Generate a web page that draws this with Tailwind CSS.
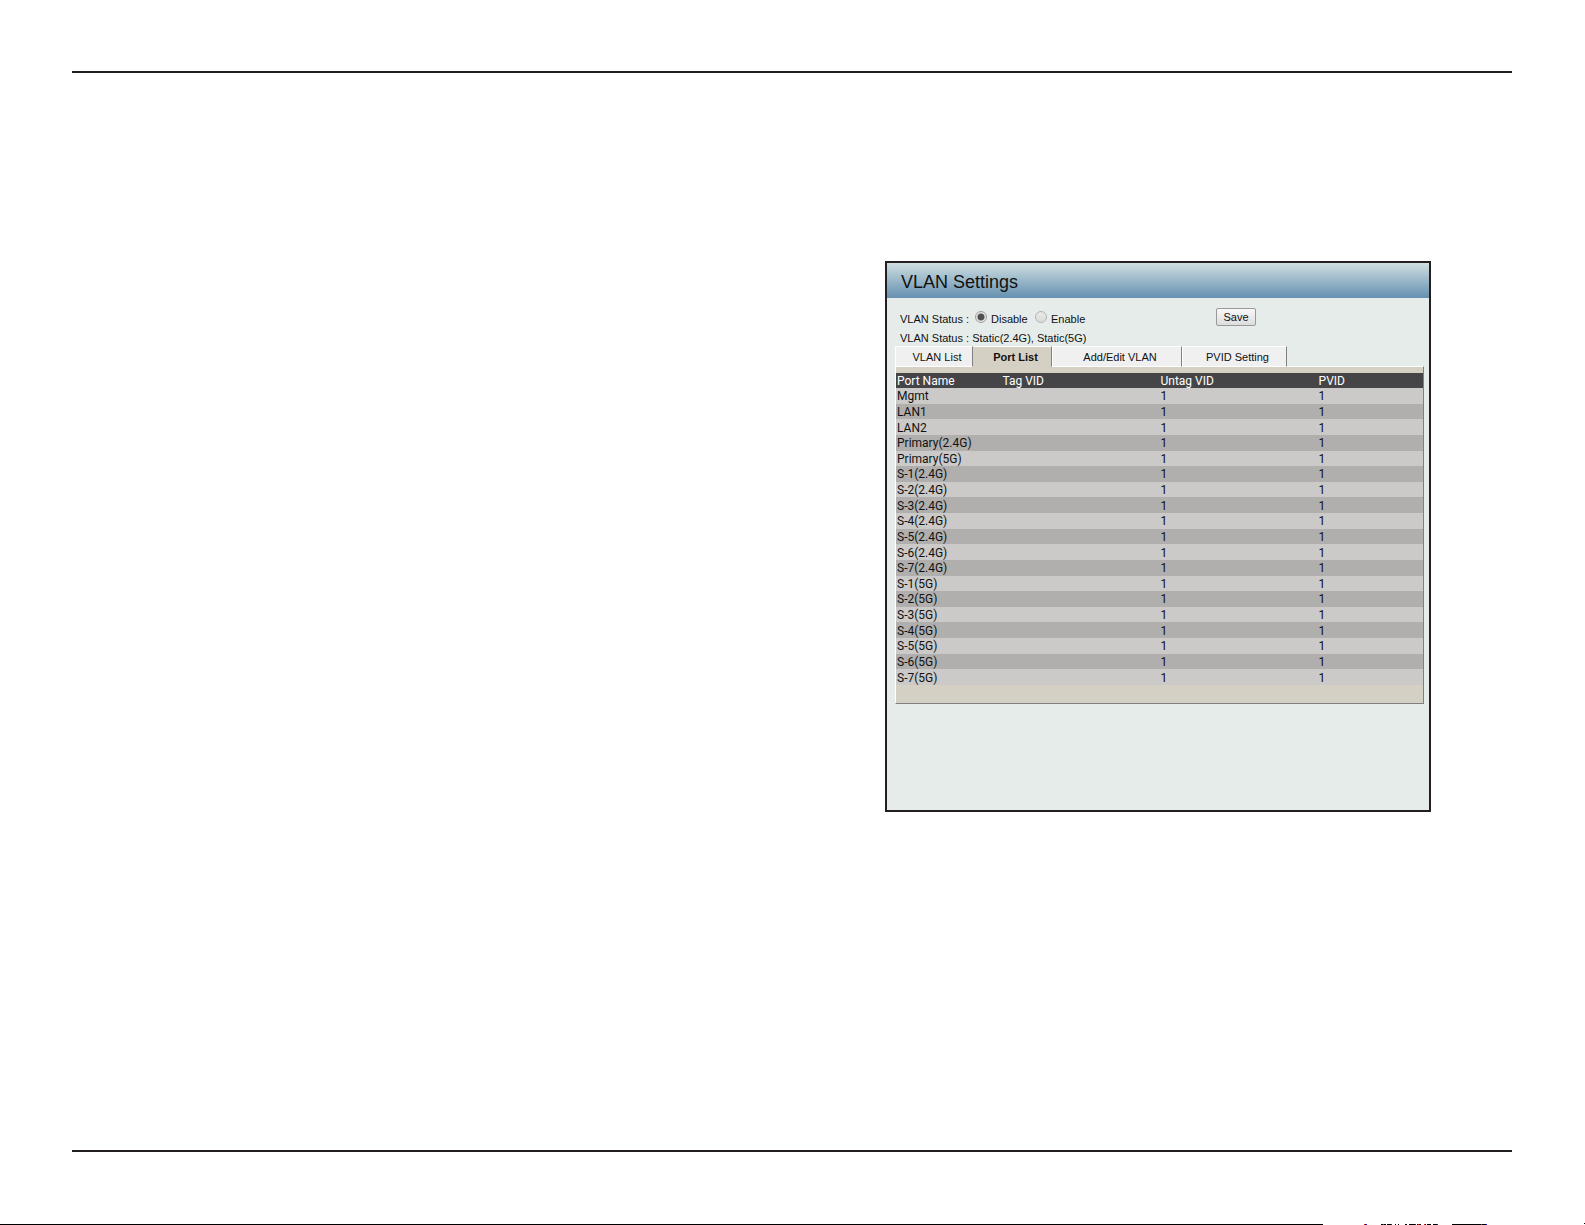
<!DOCTYPE html>
<html lang="en">
<head>
    <meta charset="UTF-8">
    <meta name="viewport" content="width=device-width, initial-scale=1.0">
    <title>VLAN Settings</title>
    <script src="https://cdn.jsdelivr.net/npm/@tailwindcss/browser@4"></script>
</head>
<body class="min-h-screen flex flex-col bg-white text-[#111] text-[11px] leading-4 font-['Liberation_Sans',Arial,sans-serif]">

    <hr class="mt-[71px] ml-[72px] mr-[73px] border-t-2 border-[#231f20]">

    <main class="grow flex justify-end items-start pt-[188px] pr-[154px] pl-[72px]">
        <section class="w-[546px] border-2 border-[#231f20] bg-[#e6ecea] pb-[106px]">
            <h1 class="h-[35px] pt-[3px] pl-[14px] flex items-center text-[18px] bg-linear-to-b from-[#d0dfe0] to-[#6490b0]">VLAN Settings</h1>

            <form class="pl-[8px] pr-[5px]">
                <!-- Status row -->
                <div class="flex items-start pt-[10px] pl-[5px]">
                    <div class="flex w-[316px] pt-[3px]">
                        <span class="w-[75px]">VLAN Status :</span>
                        <label class="flex w-[60px] gap-1">
                            <input type="radio" name="status" checked class="appearance-none size-3 rounded-full border border-[#a0a0a0] bg-[radial-gradient(circle,#505050_0_3px,#e2e2e2_4px)]">
                            Disable
                        </label>
                        <label class="flex gap-1">
                            <input type="radio" name="status" class="appearance-none size-3 rounded-full border border-[#b4b4b4] bg-linear-to-b from-[#e8e8e8] to-[#dcdcdc]">
                            Enable
                        </label>
                    </div>
                    <button type="button" class="w-10 h-[18px] border border-[#999] rounded-xs bg-linear-to-b from-[#f8f8f8] to-[#dddddd]">Save</button>
                </div>
                <p class="pl-[5px] pt-[3px]">VLAN Status : Static(2.4G), Static(5G)</p>

                <!-- Tabs -->
                <div class="relative flex -mb-px" role="tablist">
                    <button type="button" role="tab" class="w-[78px] h-[21px] pl-[6px] border border-white border-r-[#808080] bg-[#f0f0f0]">VLAN List</button>
                    <button type="button" role="tab" aria-selected="true" class="w-[79px] h-[21px] pl-[6px] border border-white border-r-[#808080] border-l-[#d4d0c4] border-b-[#d4d0c4] bg-[#d4d0c4] font-bold">Port List</button>
                    <button type="button" role="tab" class="w-[130px] h-[21px] pl-[6px] border border-white border-r-[#808080] bg-[#f0f0f0]">Add/Edit VLAN</button>
                    <button type="button" role="tab" class="w-[105px] h-[21px] pl-[6px] border border-white border-r-[#808080] bg-[#f0f0f0]">PVID Setting</button>
                </div>

                <!-- Port list -->
                <div class="border border-white border-r-[#808080] border-b-[#808080] bg-[#d4d0c4] pt-[6px] pb-[18px]">
                    <table class="w-full h-[312px] table-fixed text-left text-[12px] leading-[14px] font-[Roboto,'Noto_Sans',sans-serif]">
                        <thead class="bg-[#454547] text-white">
                            <tr>
                                <th class="w-[20%] pt-px pl-px font-normal">Port Name</th>
                                <th class="w-[30%] pt-px pl-px font-normal">Tag VID</th>
                                <th class="w-[30%] pt-px pl-px font-normal">Untag VID</th>
                                <th class="w-[20%] pt-px pl-px font-normal">PVID</th>
                            </tr>
                        </thead>
                        <tbody id="portRows"></tbody>
                    </table>
                </div>
            </form>
        </section>
    </main>

    <footer>
        <hr class="ml-[72px] mr-[73px] border-t-2 border-[#231f20]">
        <div class="flex items-end mt-[71px]">
            <div class="grow h-px bg-black"></div>
            <svg class="w-[262px] h-[2px]" viewBox="0 0 262 2" shape-rendering="crispEdges" aria-hidden="true">
                <path fill="#000" d="M41 1h3v1h-3zM58 1h5v1h-5zM64 1h5v1h-5zM72 1h1v1h-1zM75 1h1v1h-1zM82 1h2v1h-2zM86 1h7v1h-7zM94 1h4v1h-4zM101 1h2v1h-2zM104 1h4v1h-4zM110 1h5v1h-5zM129 1h35v1h-35zM261 0h1v1h-1z"/>
                <path fill="#1a1ae0" d="M43 1h1v1h-1zM68 1h1v1h-1zM92 1h1v1h-1zM114 1h1v1h-1zM163 1h1v1h-1z"/>
                <path fill="#d02020" d="M41 1h1v1h-1zM60 1h1v1h-1zM95 1h1v1h-1zM101 1h1v1h-1zM158 1h1v1h-1z"/>
            </svg>
        </div>
    </footer>

    <script>
        const ports = ['Mgmt', 'LAN1', 'LAN2', 'Primary(2.4G)', 'Primary(5G)'];
        ['2.4G', '5G'].forEach(band => {
            for (let i = 1; i <= 7; i++) ports.push(`S-${i}(${band})`);
        });

        document.getElementById('portRows').innerHTML = ports.map(port => `
            <tr class="odd:bg-[#cbcac8] even:bg-[#b0afad]">
                <td class="pt-px pl-px">${port}</td>
                <td class="pt-px pl-px"></td>
                <td class="pt-px pl-px">1</td>
                <td class="pt-px pl-px">1</td>
            </tr>`).join('');
    </script>

</body>
</html>
